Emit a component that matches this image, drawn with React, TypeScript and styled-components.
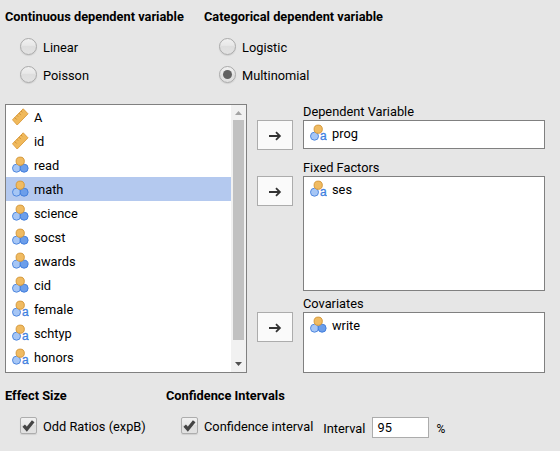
import React from "react";
import styled, { createGlobalStyle } from "styled-components";

const GlobalStyle = createGlobalStyle`
  * { box-sizing: border-box; }
  body {
    margin: 0;
    background: #e6e6e6;
    color: #000;
    font: 12.8px/16px Roboto, sans-serif;
  }
`;

const Panel = styled.main`
  width: 560px;
  height: 451px;
  padding: 8px 0 0 5px;
  overflow: hidden;
  background: #e6e6e6;
`;

const ModelOptions = styled.section`
  display: flex;
  height: 96px;
`;

const OptionGroup = styled.div<{ $width: number }>`
  width: ${(p) => p.$width}px;
`;

const Heading = styled.h2`
  margin: 0;
  font-size: 12.8px;
  line-height: 17px;
  font-weight: 700;
  white-space: nowrap;
`;

const RadioList = styled.div`
  padding: 8px 0 0 15px;
`;

const Choice = styled.div`
  display: flex;
  align-items: center;
  gap: 6px;
  height: 28px;
  white-space: nowrap;
`;

const Caption = styled.span`
  padding-top: 2px;
`;

const RadioMark = styled.span`
  display: flex;
  align-items: center;
  justify-content: center;
  width: 17px;
  height: 17px;
  margin-top: -1px;
  border: 1px solid #aaa;
  border-radius: 50%;
  background: linear-gradient(#f0f0f0 0%, #e8e8e8 42%, #dedede 50%, #e2e2e2 100%);
  box-shadow: 0 1px 1px #cfcfcf;
`;

const RadioDot = styled.span`
  width: 9px;
  height: 9px;
  border-radius: 50%;
  background: #606060;
`;

const Assignment = styled.section`
  display: flex;
  height: 269px;
`;

const VariableList = styled.div`
  display: flex;
  width: 242px;
  border: 1px solid #808080;
  background: #fff;
`;

const Rows = styled.div`
  flex: 1;
`;

const VariableRow = styled.div<{ $selected?: boolean }>`
  display: flex;
  align-items: center;
  gap: 5px;
  height: 24px;
  padding-left: 6px;
  background: ${(p) => (p.$selected ? "#b4c9ef" : "transparent")};

  svg { flex: none; display: block; }
`;

const ScrollTrack = styled.div`
  display: flex;
  flex-direction: column;
  align-items: center;
  width: 15px;
  background: #f1f1f1;

  svg { display: block; flex: none; }
`;

const ScrollThumb = styled.div`
  width: 11px;
  height: 220px;
  margin-bottom: 17px;
  background: #c1c1c1;
`;

const Target = styled.div<{ $height: number }>`
  display: grid;
  grid-template-columns: 36px 242px;
  column-gap: 10px;
  align-items: start;
  height: ${(p) => p.$height}px;
`;

const Targets = styled.div`
  margin-left: 10px;
`;

const MoveButton = styled.button`
  display: flex;
  align-items: center;
  justify-content: center;
  width: 36px;
  height: 30px;
  margin: 16px 0 0;
  padding: 2px 0 0;
  border: 1px solid #acacac;
  background: #fafafa;
`;

const TargetLabel = styled.div`
  height: 16px;
  white-space: nowrap;
`;

const TargetBox = styled.div<{ $height: number }>`
  height: ${(p) => p.$height}px;
  border: 1px solid #808080;
  background: #fff;
`;

const Footer = styled.section`
  display: flex;
  padding-top: 14px;
`;

const FooterRow = styled.div`
  display: flex;
  align-items: flex-start;
  padding: 12px 0 0 15px;
`;

const CheckLabel = styled.label`
  display: flex;
  align-items: center;
  gap: 6px;
  height: 20px;
  white-space: nowrap;
`;

const CheckBox = styled.span`
  display: flex;
  width: 17px;
  height: 17px;
  margin-top: -1px;
  border: 1px solid #adadad;
  border-radius: 2px;
  background: linear-gradient(#f1f1f1 0%, #e8e8e8 45%, #dedede 50%, #e2e2e2 100%);
  box-shadow: 0 1px 1px #cfcfcf;

  svg { display: block; margin: -1px; }
`;

const IntervalLabel = styled.span`
  margin: 5px 7px 0 10px;
`;

const IntervalField = styled.input`
  width: 57px;
  height: 21px;
  margin: 1px 7px 0 0;
  padding: 0 4px;
  border: 1px solid #acacac;
  border-radius: 0;
  background: #fff;
  color: #000;
  font: 12.8px/19px Roboto, sans-serif;
`;

const Percent = styled.span`
  margin-top: 5px;
  font-size: 12px;
`;

type Kind = "id" | "nominal" | "text";

function VariableIcon({ kind }: { kind: Kind }) {
  if (kind === "id") {
    return (
      <svg width="17" height="18" viewBox="0 0 17 18">
        <path d="M.5 11.8 11.2.8l4.8 5L5.2 17Z" fill="#f0b95b" stroke="#dea044" strokeLinejoin="round" />
        <path d="m2.7 9.5 2 2m.1-4.2 1.3 1.3m.8-3.5 2 2m.1-4.1 1.3 1.3" stroke="#c98b32" strokeWidth=".9" />
      </svg>
    );
  }
  return (
    <svg width="17" height="18" viewBox="0 0 17 18">
      <circle cx="4.5" cy="12.2" r="4" fill="#a6c6f5" stroke="#5088df" />
      {kind === "nominal" && <circle cx="12.1" cy="12.2" r="4" fill="#6c9eea" stroke="#437fdd" />}
      <circle cx="8.2" cy="5.2" r="4.1" fill="#f0bb62" stroke="#d69a3d" />
      {kind === "text" && (
        <text x="10" y="16" fill="#3d7fe0" fontFamily="Liberation Sans, sans-serif" fontSize="12" stroke="#3d7fe0" strokeWidth=".3">a</text>
      )}
    </svg>
  );
}

function Variable({ name, kind, selected }: { name: string; kind: Kind; selected?: boolean }) {
  return (
    <VariableRow $selected={selected}>
      <VariableIcon kind={kind} />
      <Caption>{name}</Caption>
    </VariableRow>
  );
}

function Radio({ label, checked }: { label: string; checked?: boolean }) {
  return (
    <Choice role="radio" aria-checked={!!checked}>
      <RadioMark>{checked && <RadioDot />}</RadioMark>
      <Caption>{label}</Caption>
    </Choice>
  );
}

function Check({ label }: { label: string }) {
  return (
    <CheckLabel>
      <CheckBox>
        <svg width="17" height="17" viewBox="0 0 17 17">
          <path d="m3.7 8.7 3.1 3.5 6.4-8" fill="none" stroke="#444" strokeWidth="3.3" />
        </svg>
      </CheckBox>
      <Caption>{label}</Caption>
    </CheckLabel>
  );
}

function Supplier({ label, height, boxHeight, name, kind }: { label: string; height: number; boxHeight: number; name: string; kind: Kind }) {
  return (
    <Target $height={height}>
      <MoveButton aria-label={`Move to ${label}`}>
        <svg width="14" height="12" viewBox="0 0 14 12">
          <path d="M1 6h11M8 2.1 11.9 6 8 9.9" fill="none" stroke="#333" strokeWidth="1.8" />
        </svg>
      </MoveButton>
      <div>
        <TargetLabel>{label}</TargetLabel>
        <TargetBox $height={boxHeight}>
          <Variable name={name} kind={kind} />
        </TargetBox>
      </div>
    </Target>
  );
}

const variables: { name: string; kind: Kind }[] = [
  { name: "A", kind: "id" },
  { name: "id", kind: "id" },
  { name: "read", kind: "nominal" },
  { name: "math", kind: "nominal" },
  { name: "science", kind: "nominal" },
  { name: "socst", kind: "nominal" },
  { name: "awards", kind: "nominal" },
  { name: "cid", kind: "nominal" },
  { name: "female", kind: "text" },
  { name: "schtyp", kind: "text" },
  { name: "honors", kind: "text" },
];

export default function App() {
  return (
    <>
      <GlobalStyle />
      <Panel>
        <ModelOptions>
          <OptionGroup $width={199}>
            <Heading>Continuous dependent variable</Heading>
            <RadioList>
              <Radio label="Linear" />
              <Radio label="Poisson" />
            </RadioList>
          </OptionGroup>
          <OptionGroup $width={220}>
            <Heading>Categorical dependent variable</Heading>
            <RadioList>
              <Radio label="Logistic" />
              <Radio label="Multinomial" checked />
            </RadioList>
          </OptionGroup>
        </ModelOptions>
        <Assignment>
          <VariableList>
            <Rows>
              {variables.map((v) => (
                <Variable key={v.name} {...v} selected={v.name === "math"} />
              ))}
            </Rows>
            <ScrollTrack>
              <svg width="15" height="15" viewBox="0 0 15 15">
                <path d="M4 10h7L7.5 6Z" fill="#a3a3a3" />
              </svg>
              <ScrollThumb />
              <svg width="15" height="15" viewBox="0 0 15 15">
                <path d="M4 5h7L7.5 9Z" fill="#505050" />
              </svg>
            </ScrollTrack>
          </VariableList>
          <Targets>
            <Supplier label="Dependent Variable" height={56} boxHeight={29} name="prog" kind="text" />
            <Supplier label="Fixed Factors" height={136} boxHeight={115} name="ses" kind="text" />
            <Supplier label="Covariates" height={77} boxHeight={61} name="write" kind="nominal" />
          </Targets>
        </Assignment>
        <Footer>
          <OptionGroup $width={161}>
            <Heading>Effect Size</Heading>
            <FooterRow>
              <Check label="Odd Ratios (expB)" />
            </FooterRow>
          </OptionGroup>
          <OptionGroup $width={320}>
            <Heading>Confidence Intervals</Heading>
            <FooterRow>
              <Check label="Confidence interval" />
              <IntervalLabel>Interval</IntervalLabel>
              <IntervalField defaultValue="95" aria-label="Interval" />
              <Percent>%</Percent>
            </FooterRow>
          </OptionGroup>
        </Footer>
      </Panel>
    </>
  );
}
